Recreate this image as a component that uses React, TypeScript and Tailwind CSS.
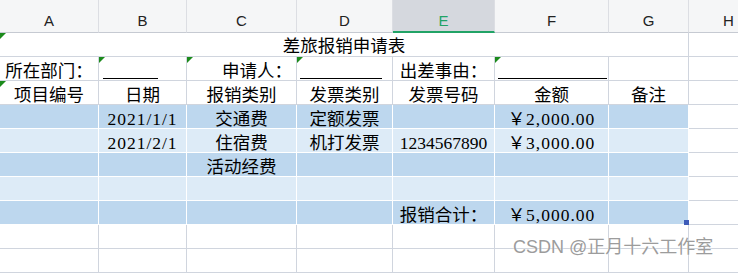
import type { ReactNode } from 'react';

const colLetters = ['A', 'B', 'C', 'D', 'E', 'F', 'G', 'H'];

// little green "number stored as text" marker
function Tri() {
  return (
    <span className="absolute left-0 top-0 h-0 w-0 border-t-[6px] border-r-[6px] border-t-[#1b8a1b] border-r-transparent" />
  );
}

function Cell({
  children,
  className = '',
  tri = false,
}: {
  children?: ReactNode;
  className?: string;
  tri?: boolean;
}) {
  return (
    <div className={`relative flex h-[24px] items-end overflow-visible whitespace-nowrap border-b border-r leading-[18px] ${className}`}>
      {tri && <Tri />}
      {children}
    </div>
  );
}

function Line({ className }: { className: string }) {
  return <span className={`mb-[1px] h-0 border-b border-black ${className}`} />;
}

const grid = 'border-[#d0d5de]';
const dark = 'bg-[#bdd7ee] border-white';
const light = 'bg-[#ddebf7] border-white';

type Row = { fill: string; cells: ReactNode[] };

const dataRows: Row[] = [
  { fill: dark, cells: ['', '2021/1/1', '交通费', '定额发票', '', '￥2,000.00', ''] },
  { fill: light, cells: ['', '2021/2/1', '住宿费', '机打发票', '1234567890', '￥3,000.00', ''] },
  { fill: dark, cells: ['', '', '活动经费', '', '', '', ''] },
  { fill: light, cells: ['', '', '', '', '', '', ''] },
  { fill: dark, cells: ['', '', '', '', '报销合计：', '￥5,000.00', ''] },
];

export default function App() {
  return (
    <div
      className="relative h-[273px] w-[738px] overflow-hidden bg-white text-[17.5px] text-black"
      style={{ fontFamily: '"Liberation Serif", "Noto Sans CJK SC", serif' }}
    >
      <div className="grid w-[769px] grid-cols-[99px_88px_110px_96px_102px_114px_80px_80px]">
        {/* column header */}
        {colLetters.map(l =>
          l === 'E' ? (
            <div
              key={l}
              className="flex h-[33px] items-start justify-center border-b-2 border-r border-b-[#21a366] border-r-[#dcdee3] bg-[#d5d8de] pt-[13px] font-['Liberation_Sans',sans-serif] text-[15px] leading-[15px] text-[#21a366]"
            >
              {l}
            </div>
          ) : (
            <div
              key={l}
              className="flex h-[33px] items-start justify-center border-b border-r border-b-[#c6cad2] border-r-[#dcdee3] bg-[#f5f6f7] pt-[13px] font-['Liberation_Sans',sans-serif] text-[15px] leading-[15px] text-[#222]"
            >
              {l}
            </div>
          )
        )}

        {/* row 1: title */}
        <Cell tri className={`col-span-7 justify-center pb-[1px] ${grid}`}>差旅报销申请表</Cell>
        <Cell className={grid} />

        {/* row 2 */}
        <Cell className={`justify-center ${grid}`}>所在部门：</Cell>
        <Cell tri className={`pl-[4px] ${grid}`}><Line className="w-[55px]" /></Cell>
        <Cell tri className={`justify-end pr-[4px] ${grid}`}>申请人：</Cell>
        <Cell tri className={`pl-[3px] ${grid}`}><Line className="w-[82px]" /></Cell>
        <Cell className={`justify-center ${grid}`}>出差事由：</Cell>
        <Cell tri className={`pl-[3px] ${grid}`}><Line className="w-[109px]" /></Cell>
        <Cell className={grid} />
        <Cell className={grid} />

        {/* row 3 */}
        <Cell tri className={`justify-center ${grid}`}>项目编号</Cell>
        <Cell className={`justify-center ${grid}`}>日期</Cell>
        <Cell className={`justify-center ${grid}`}>报销类别</Cell>
        <Cell className={`justify-center ${grid}`}>发票类别</Cell>
        <Cell className={`justify-center ${grid}`}>发票号码</Cell>
        <Cell className={`justify-center ${grid}`}>金额</Cell>
        <Cell className={`justify-center ${grid}`}>备注</Cell>
        <Cell className={grid} />

        {/* filled data rows */}
        {dataRows.map((row, r) => (
          <div key={r} className="contents">
            {row.cells.map((c, i) => {
              const spaced = typeof c === 'string' && /[\/,]/.test(c);
              return (
                <Cell key={i} className={`justify-center ${row.fill} ${spaced ? 'tracking-[1px]' : ''}`}>
                  {c}
                  {r === 4 && i === 6 && (
                    <span className="absolute bottom-[-1px] right-[-1px] h-[5px] w-[5px] bg-[#3d5bb8]" />
                  )}
                </Cell>
              );
            })}
            <Cell className={grid} />
          </div>
        ))}

        {/* empty rows */}
        {[0, 1].map(r => (
          <div key={r} className="contents">
            {colLetters.map(l => (
              <Cell key={l} className={grid} />
            ))}
          </div>
        ))}
      </div>

      {/* watermark */}
      <div className="absolute left-[513px] top-[238px] font-['Liberation_Sans','Noto_Sans_CJK_SC',sans-serif] text-[18px] leading-[18px] text-[#9c9c9c] [text-shadow:0_0_2px_#fff]">
        CSDN @正月十六工作室
      </div>
    </div>
  );
}
